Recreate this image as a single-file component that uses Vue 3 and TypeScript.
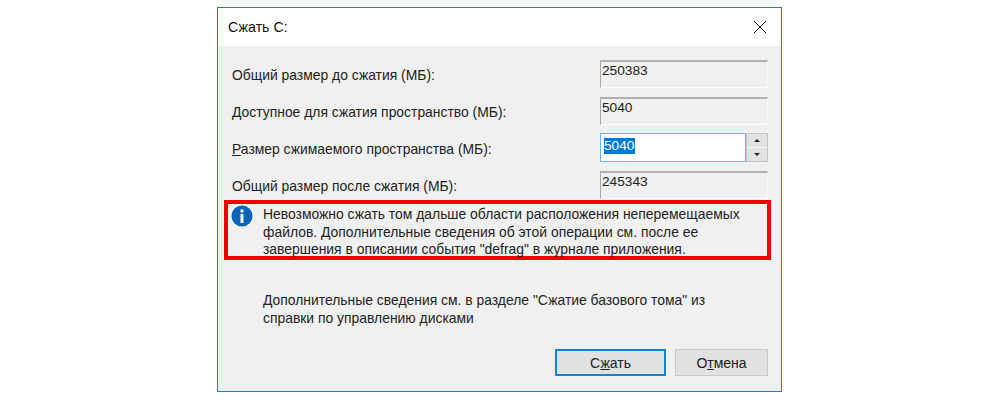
<script setup lang="ts">
interface SizeRow {
  label: string;
  value: string;
  editable?: boolean;
}

const rows: SizeRow[] = [
  { label: "Общий размер до сжатия (МБ):", value: "250383" },
  { label: "Доступное для сжатия пространство (МБ):", value: "5040" },
  { label: "Размер сжимаемого пространства (МБ):", value: "5040", editable: true },
  { label: "Общий размер после сжатия (МБ):", value: "245343" },
];
</script>

<template>
  <div class="page">
    <div class="window">
      <div class="titlebar">
        <span class="title">Сжать C:</span>
        <svg class="close" width="14" height="14" viewBox="0 0 14 14">
          <path d="M1 1L13 13M13 1L1 13" stroke="#111" stroke-width="1" fill="none" />
        </svg>
      </div>
      <div class="body">
        <div class="rows">
          <div v-for="row in rows" :key="row.label" class="row">
            <span class="label">
              <template v-if="row.editable"><u>Р</u>азмер сжимаемого пространства (МБ):</template>
              <template v-else>{{ row.label }}</template>
            </span>
            <div v-if="row.editable" class="spin">
              <div class="input"><span class="selected">{{ row.value }}</span></div>
              <div class="arrows">
                <div class="arrow"><i class="up"></i></div>
                <div class="arrow"><i class="down"></i></div>
              </div>
            </div>
            <div v-else class="readonly">{{ row.value }}</div>
          </div>
        </div>

        <div class="notice">
          <svg class="info" width="22" height="22" viewBox="0 0 22 22">
            <circle cx="11" cy="11" r="10.5" fill="#0a66b8" />
            <circle cx="11" cy="6" r="1.7" fill="#fff" />
            <rect x="9.5" y="9" width="3" height="9" fill="#fff" />
          </svg>
          <p>Невозможно сжать том дальше области расположения неперемещаемых файлов. Дополнительные сведения об этой операции см. после ее завершения в описании события "defrag" в журнале приложения.</p>
        </div>

        <p class="help">Дополнительные сведения см. в разделе "Сжатие базового тома" из справки по управлению дисками</p>

        <div class="buttons">
          <button class="btn primary">С<u>ж</u>ать</button>
          <button class="btn">О<u>т</u>мена</button>
        </div>
      </div>
    </div>
  </div>
</template>

<style>
body {
  background: #fff;
}
</style>

<style scoped>
.page {
  width: 1000px;
  height: 400px;
  overflow: hidden;
  display: flex;
  justify-content: center;
  padding-top: 7px;
  box-sizing: border-box;
  font-family: "Liberation Sans", Arial, sans-serif;
  font-size: 13.9px;
  color: #222;
}
.window {
  width: 565px;
  height: 385px;
  margin-left: -1px;
  box-sizing: border-box;
  border: 1px solid #1c7fc9;
  background: #f0f0f0;
  display: flex;
  flex-direction: column;
}
.titlebar {
  height: 38px;
  background: #fff;
  display: flex;
  align-items: center;
  justify-content: space-between;
  padding: 0 14px 0 10px;
  flex-shrink: 0;
}
.title {
  font-size: 14.2px;
  color: #111;
}
.body {
  flex: 1;
  display: flex;
  flex-direction: column;
  padding: 14px 13px 0 6px;
}
.rows {
  display: flex;
  flex-direction: column;
  gap: 9px;
  padding-left: 8px;
}
.row {
  display: flex;
  justify-content: space-between;
  align-items: flex-start;
  height: 28px;
}
.label {
  padding-top: 7px;
  color: #222;
}
.readonly {
  width: 168px;
  height: 28px;
  box-sizing: border-box;
  border-top: 2px solid #b0b0b0;
  border-left: 1px solid #a8a8a8;
  border-right: 1px solid #f8f8f8;
  border-bottom: 1px solid #fbfbfb;
  padding-left: 1px;
  line-height: 17px;
  font-size: 13.7px;
  color: #222;
}
.spin {
  width: 168px;
  height: 29px;
  display: flex;
  margin-top: -1px;
}
.input {
  flex: 1;
  box-sizing: border-box;
  background: #fff;
  border: 1px solid #6ab8ea;
  padding: 3px 0 0 3px;
  font-size: 13.7px;
  line-height: 17px;
}
.selected {
  background: #0078d7;
  color: #fff;
  display: inline-block;
  padding: 0 1px 0 0;
  height: 16px;
  line-height: 16px;
}
.arrows {
  width: 22px;
  box-sizing: border-box;
  border: 1px solid #c4c4c4;
  display: flex;
  flex-direction: column;
  gap: 1px;
  background: #f4f4f4;
}
.arrow {
  flex: 1;
  background: #e2e2e2;
  display: flex;
  align-items: center;
  justify-content: center;
}
.up {
  border: 3px solid transparent;
  border-top: 0;
  border-bottom: 3px solid #222;
}
.down {
  border: 3px solid transparent;
  border-bottom: 0;
  border-top: 3px solid #222;
}
.notice {
  margin-top: 1px;
  height: 60px;
  box-sizing: border-box;
  border: 4px solid #f00000;
  display: flex;
  align-items: flex-start;
  gap: 10px;
  padding: 1px 4px 0 3px;
  width: 547px;
}
.info {
  flex-shrink: 0;
}
.notice p {
  margin: 0;
  padding-top: 1px;
  line-height: 17.5px;
  width: 495px;
}
.help {
  margin: 31px 0 0;
  padding-left: 39px;
  width: 480px;
  line-height: 18px;
}
.buttons {
  display: flex;
  justify-content: flex-end;
  gap: 9px;
  margin-top: auto;
  padding-bottom: 15px;
}
.btn {
  width: 93px;
  height: 27px;
  box-sizing: border-box;
  background: #e1e1e1;
  border: 1px solid #c8c8c8;
  font-family: inherit;
  font-size: 14px;
  color: #222;
  padding: 0;
}
.btn.primary {
  width: 111px;
  border: 2px solid #0f83d6;
}
</style>
